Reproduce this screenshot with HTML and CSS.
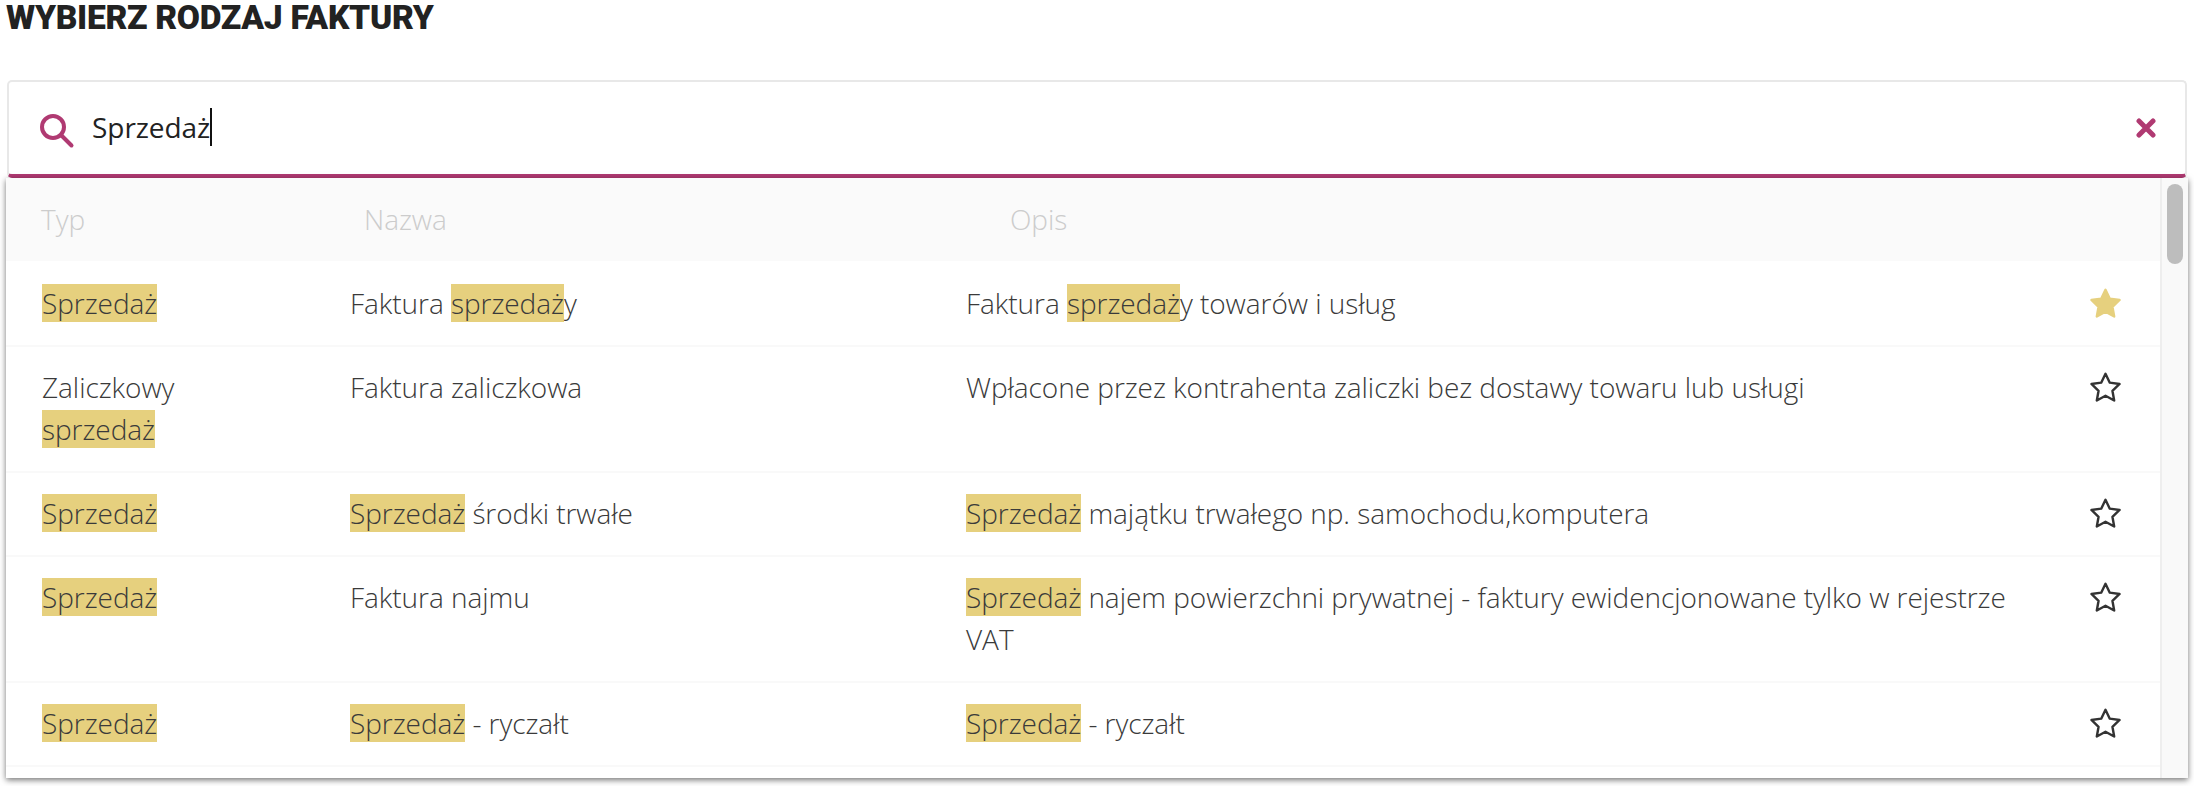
FILE: index.html
```html
<!DOCTYPE html>
<html lang="pl">
<head>
<meta charset="utf-8">
<title>Wybierz rodzaj faktury</title>
<link rel="stylesheet" href="styles.css">
</head>
<body>
<h1 class="title">WYBIERZ RODZAJ FAKTURY</h1>
<div class="picker">
  <div class="search">
    <svg class="search-icon" viewBox="0 0 36 36" aria-hidden="true"><circle cx="14" cy="14" r="11"/><path d="M22 22 L32.5 32.5"/></svg>
    <div class="search-value"><span class="search-text">Sprzedaż</span><span class="caret"></span></div>
    <svg class="clear-icon" viewBox="0 0 20 20" aria-hidden="true"><path d="M3 3 L17 17 M17 3 L3 17"/></svg>
  </div>
  <div class="dropdown">
    <div class="list">
      <div class="row head"><div class="h-typ">Typ</div><div class="h-nazwa">Nazwa</div><div class="h-opis">Opis</div><div></div></div>
      <div class="row">
        <div class="typ"><mark>Sprzedaż</mark></div>
        <div>Faktura <mark>sprzedaż</mark>y</div>
        <div>Faktura <mark>sprzedaż</mark>y towarów i usług</div>
        <svg class="star fav" viewBox="0 0 30 30" aria-hidden="true"><path d="M15 2.5 L18.9 10.6 L27.8 11.8 L21.3 18 L22.9 26.8 L15 22.5 L7.1 26.8 L8.7 18 L2.2 11.8 L11.1 10.6 Z"/></svg>
      </div>
      <div class="row">
        <div class="typ">Zaliczkowy <mark>sprzedaż</mark></div>
        <div>Faktura zaliczkowa</div>
        <div>Wpłacone przez kontrahenta zaliczki bez dostawy towaru lub usługi</div>
        <svg class="star" viewBox="0 0 30 30" aria-hidden="true"><path d="M15 2.5 L18.9 10.6 L27.8 11.8 L21.3 18 L22.9 26.8 L15 22.5 L7.1 26.8 L8.7 18 L2.2 11.8 L11.1 10.6 Z"/></svg>
      </div>
      <div class="row">
        <div class="typ"><mark>Sprzedaż</mark></div>
        <div><mark>Sprzedaż</mark> środki trwałe</div>
        <div><mark>Sprzedaż</mark> majątku trwałego np. samochodu,komputera</div>
        <svg class="star" viewBox="0 0 30 30" aria-hidden="true"><path d="M15 2.5 L18.9 10.6 L27.8 11.8 L21.3 18 L22.9 26.8 L15 22.5 L7.1 26.8 L8.7 18 L2.2 11.8 L11.1 10.6 Z"/></svg>
      </div>
      <div class="row">
        <div class="typ"><mark>Sprzedaż</mark></div>
        <div>Faktura najmu</div>
        <div><mark>Sprzedaż</mark> najem powierzchni prywatnej - faktury ewidencjonowane tylko w rejestrze VAT</div>
        <svg class="star" viewBox="0 0 30 30" aria-hidden="true"><path d="M15 2.5 L18.9 10.6 L27.8 11.8 L21.3 18 L22.9 26.8 L15 22.5 L7.1 26.8 L8.7 18 L2.2 11.8 L11.1 10.6 Z"/></svg>
      </div>
      <div class="row">
        <div class="typ"><mark>Sprzedaż</mark></div>
        <div><mark>Sprzedaż</mark> - ryczałt</div>
        <div><mark>Sprzedaż</mark> - ryczałt</div>
        <svg class="star" viewBox="0 0 30 30" aria-hidden="true"><path d="M15 2.5 L18.9 10.6 L27.8 11.8 L21.3 18 L22.9 26.8 L15 22.5 L7.1 26.8 L8.7 18 L2.2 11.8 L11.1 10.6 Z"/></svg>
      </div>
      <div class="list-end"></div>
    </div>
    <div class="scrollbar"><div class="thumb"></div></div>
  </div>
</div>
</body>
</html>
```

FILE: styles.css
```css
* { box-sizing: border-box; }
html, body { margin: 0; height: 100%; overflow: hidden; background: #fff; }
body { font-family: "Open Sans", sans-serif; color: #333; padding-left: 6px; padding-right: 6px; }
.title {
  margin: 0;
  height: 80px;
  font-family: Roboto, sans-serif;
  font-weight: 900;
  font-size: 33.6px;
  line-height: 36px;
  letter-spacing: -0.3px;
  color: #222;
}
.picker { width: 2182px; }
.search {
  display: flex;
  align-items: center;
  height: 98px;
  margin: 0 1px;
  padding: 0 29px 0 30px;
  background: #fff;
  border: 2px solid #e8e8e8;
  border-bottom: 4px solid #b03a72;
  border-radius: 5px;
}
.search-icon { width: 36px; height: 36px; flex: none; margin-top: 5px; fill: none; stroke: #b03a72; stroke-width: 4; stroke-linecap: round; }
.search-value { flex: 1; display: flex; align-items: center; margin-left: 17px; margin-top: -2px; }
.search-text { font-size: 28px; line-height: 38px; color: #222; letter-spacing: -0.05px; }
.caret { width: 2px; height: 38px; background: #111; }
.clear-icon { width: 20px; height: 20px; flex: none; fill: none; stroke: #b03a72; stroke-width: 5; stroke-linecap: round; }
.dropdown {
  display: flex;
  height: 600px;
  background: #fff;
  box-shadow: 0 2px 6px rgba(0,0,0,.55);
}
.list { flex: 1; min-width: 0; }
.row {
  display: grid;
  grid-template-columns: 308px 616px 1fr 70px;
  padding: 19px 0 21px 36px;
  font-size: 28px;
  font-weight: 300;
  line-height: 42px;
  letter-spacing: -0.05px;
  color: #3a3a3a;
  border-top: 2px solid #f9f9f9;
}
.row > div { padding-right: 40px; }
.row > .typ { padding-right: 70px; }
.row mark { background: #e6d07e; color: inherit; }
.head { height: 83px; padding-top: 20px; background: #fafafa; color: #ccc; border-top: 0; }
.head + .row { border-top-color: #fff; }
.h-typ { margin-left: -1px; }
.h-nazwa { padding-left: 14px; }
.h-opis { padding-left: 44px; }
.list-end { border-top: 2px solid #f9f9f9; }
.star { width: 33px; height: 33px; margin-top: 5px; margin-left: -1px; justify-self: start; fill: none; stroke: #333; stroke-width: 2.2; stroke-linejoin: round; }
.star.fav { fill: #e6d07e; stroke: #e6d07e; }
.scrollbar { width: 28px; flex: none; padding: 6px 5px 0 5px; background: #f9f9f9; border-left: 2px solid #eee; }
.thumb { height: 80px; background: #bdbdbd; border-radius: 8px; }
```
